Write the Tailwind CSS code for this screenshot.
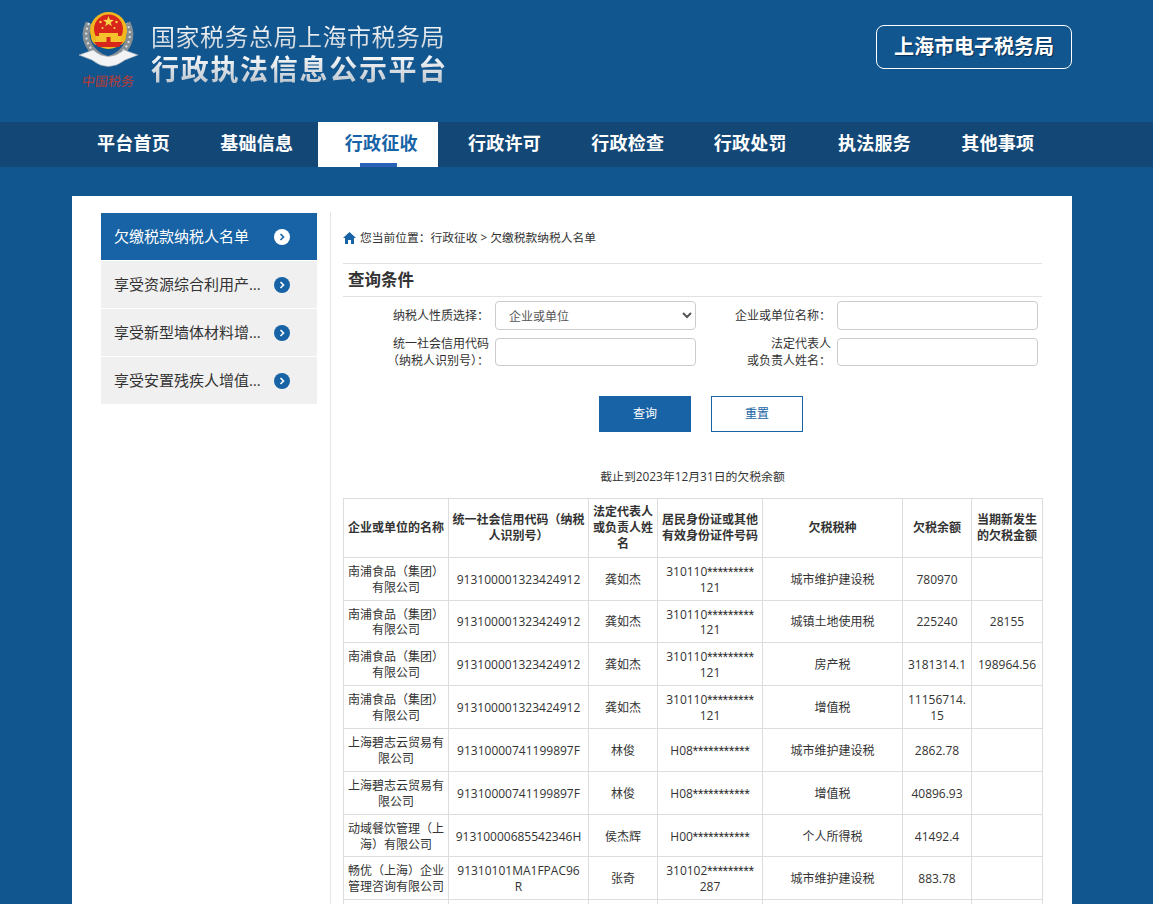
<!DOCTYPE html>
<html lang="zh-CN">
<head>
  <meta charset="UTF-8">
  <title>行政执法信息公示平台</title>
  <script src="https://cdn.jsdelivr.net/npm/@tailwindcss/browser@4"></script>
</head>
<body class="h-screen overflow-hidden bg-[#125690] font-['Open_Sans','Noto_Sans_CJK_SC',sans-serif] text-xs text-[#333]">

  <!-- Header -->
  <header class="flex h-[122px] items-start pl-[75px]">
    <div class="flex w-[66px] flex-col items-center pt-[10px]">
      <svg width="66" height="60" viewBox="0 0 66 60">
        <path d="M14 13 C7 27 13 43 33 50 C53 43 59 27 52 13" fill="none" stroke="#858e93" stroke-width="7"/>
        <path d="M14 13 C7 27 13 43 33 50 C53 43 59 27 52 13" fill="none" stroke="#dfe3e5" stroke-width="2" stroke-dasharray="2 3"/>
        <path d="M4 45 L18 40 Q33 53 49 40 L63 45 L50 50 Q33 63 17 50 Z" fill="#f1f3f4" stroke="#a6aeb3" stroke-width=".6"/>
        <path d="M16 27 C16 8 51 8 51 27 C51 31 48 34 46 35 H21 C19 34 16 31 16 27 Z" fill="#f0b81e"/>
        <circle cx="33.5" cy="20.5" r="18.5" fill="#f0b81e"/>
        <circle cx="33.5" cy="19" r="14.5" fill="#d8261c"/>
        <path d="M33.5 6 l1.4 3.8 4 .1 -3.2 2.5 1.2 3.9 -3.4 -2.3 -3.4 2.3 1.2 -3.9 -3.2 -2.5 4 -.1 Z" fill="#f9d648"/>
        <circle cx="25.5" cy="12" r="1.2" fill="#f9d648"/><circle cx="41.5" cy="12" r="1.2" fill="#f9d648"/>
        <circle cx="27.5" cy="18" r="1.1" fill="#f9d648"/><circle cx="39.5" cy="18" r="1.1" fill="#f9d648"/>
        <path d="M24 23 H43 V26 H46 V32 H21 V26 H24 Z" fill="#f3c22d"/>
        <path d="M19 32 H48 L44 37 H23 Z" fill="#d8261c"/>
        <rect x="31.5" y="27" width="4" height="5" fill="#d8261c"/>
      </svg>
      <span class="mt-[2px] -skew-x-6 text-[13px] leading-[18px] whitespace-nowrap text-[#b93a30] font-['Noto_Sans_CJK_SC',sans-serif]">中国税务</span>
    </div>
    <div class="ml-[10px] pt-[22px]">
      <div class="bg-gradient-to-b from-white to-[#c3ccd4] bg-clip-text text-[24px] leading-[30px] tracking-[0.5px] whitespace-nowrap text-transparent">国家税务总局上海市税务局</div>
      <div class="mt-[1px] bg-gradient-to-b from-white to-[#b9c3cc] bg-clip-text text-[28px] leading-[32px] font-bold tracking-[1.7px] whitespace-nowrap text-transparent">行政执法信息公示平台</div>
    </div>
    <a class="mt-[25px] mr-[81px] ml-auto flex h-[44px] w-[196px] items-center justify-center rounded-lg border border-white text-xl font-bold text-white [text-shadow:1px_1px_1px_#0b2f52]">上海市电子税务局</a>
  </header>

  <!-- Nav -->
  <nav class="flex h-[45px] bg-[#134876] pl-[71px] text-lg font-bold tracking-[0.25px] text-white">
    <div class="w-[123.33px]"><a class="block h-full w-[120px] pl-[26px] leading-[42px]">平台首页</a></div>
    <div class="w-[123.33px]"><a class="block h-full w-[120px] pl-[26px] leading-[42px]">基础信息</a></div>
    <div class="w-[123.33px]"><a class="relative block h-full w-[120px] bg-white pl-[27px] leading-[42px] text-[#1763a6]">行政征收<span class="absolute bottom-0 left-[42px] h-[4px] w-[37px] bg-[#2a62b8]"></span></a></div>
    <div class="w-[123.33px]"><a class="block h-full w-[120px] pl-[27px] leading-[42px]">行政许可</a></div>
    <div class="w-[123.33px]"><a class="block h-full w-[120px] pl-[27px] leading-[42px]">行政检查</a></div>
    <div class="w-[123.33px]"><a class="block h-full w-[120px] pl-[26px] leading-[42px]">行政处罚</a></div>
    <div class="w-[123.33px]"><a class="block h-full w-[120px] pl-[27px] leading-[42px]">执法服务</a></div>
    <div class="w-[123.33px]"><a class="block h-full w-[120px] pl-[27px] leading-[42px]">其他事项</a></div>
  </nav>

  <!-- Main -->
  <main class="mt-[29px] ml-[72px] flex w-[1000px] bg-white pl-[29px]">
    <aside class="mt-[17px] flex h-[191px] w-[216px] shrink-0 flex-col gap-[1px] text-[15px]">
      <a class="flex h-[47px] items-center bg-[#1763a6] pl-[13px] text-white">
        <span class="mb-[1px] w-[160px] truncate">欠缴税款纳税人名单</span>
        <span class="flex h-4 w-4 items-center justify-center rounded-full bg-white text-[#1763a6]"><svg width="8" height="8" viewBox="0 0 8 8"><path d="M2.5 1 L5.5 4 L2.5 7" fill="none" stroke="currentColor" stroke-width="1.6"/></svg></span>
      </a>
      <a class="flex h-[47px] items-center bg-[#f0f0f0] pl-[13px]">
        <span class="mr-[12px] mb-[1px] w-[148px] truncate">享受资源综合利用产品增值税优惠名单</span>
        <span class="flex h-4 w-4 items-center justify-center rounded-full bg-[#1763a6] text-white"><svg width="8" height="8" viewBox="0 0 8 8"><path d="M2.5 1 L5.5 4 L2.5 7" fill="none" stroke="currentColor" stroke-width="1.6"/></svg></span>
      </a>
      <a class="flex h-[47px] items-center bg-[#f0f0f0] pl-[13px]">
        <span class="mr-[12px] mb-[1px] w-[148px] truncate">享受新型墙体材料增值税优惠名单</span>
        <span class="flex h-4 w-4 items-center justify-center rounded-full bg-[#1763a6] text-white"><svg width="8" height="8" viewBox="0 0 8 8"><path d="M2.5 1 L5.5 4 L2.5 7" fill="none" stroke="currentColor" stroke-width="1.6"/></svg></span>
      </a>
      <a class="flex h-[47px] items-center bg-[#f0f0f0] pl-[13px]">
        <span class="mr-[12px] mb-[1px] w-[148px] truncate">享受安置残疾人增值税优惠名单</span>
        <span class="flex h-4 w-4 items-center justify-center rounded-full bg-[#1763a6] text-white"><svg width="8" height="8" viewBox="0 0 8 8"><path d="M2.5 1 L5.5 4 L2.5 7" fill="none" stroke="currentColor" stroke-width="1.6"/></svg></span>
      </a>
    </aside>

    <section class="mt-[16px] ml-[13px] w-[712px] border-l border-[#e5e5e5] pl-[12px]">
      <div class="flex h-[52px] w-[699px] items-center gap-[4px] border-b border-[#e2e2e2] pt-[1px]">
        <svg width="13" height="12" viewBox="0 0 13 12"><path d="M6.5 0 L13 6 H11 V12 H8 V8 H5 V12 H2 V6 H0 Z" fill="#1763a6"/></svg>
        <span class="text-[11.75px]">您当前位置：行政征收 &gt; 欠缴税款纳税人名单</span>
      </div>
      <h2 class="h-[33px] w-[699px] border-b border-[#e2e2e2] pl-[5px] text-[16.5px] leading-[32px] font-bold">查询条件</h2>

      <form class="mt-[4px] w-[699px]">
        <div class="flex h-[29px] items-center">
          <label class="w-[146px] text-right">纳税人性质选择：</label>
          <select class="ml-[6px] h-[29px] w-[201px] rounded border border-[#ccc] bg-white pt-[1px] pl-[9px] text-[#555]"><option>企业或单位</option></select>
          <label class="w-[135px] text-right">企业或单位名称：</label>
          <input class="ml-[6px] h-[29px] w-[201px] rounded border border-[#ccc]">
        </div>
        <div class="mt-[8px] flex h-[28px] items-center leading-[17px]">
          <label class="w-[146px] text-right">统一社会信用代码<br>（纳税人识别号）：</label>
          <input class="ml-[6px] h-[28px] w-[201px] rounded border border-[#ccc]">
          <label class="w-[135px] text-right">法定代表人<br>或负责人姓名：</label>
          <input class="ml-[6px] h-[28px] w-[201px] rounded border border-[#ccc]">
        </div>
        <div class="mt-[30px] flex gap-[20px] pl-[256px]">
          <button type="button" class="h-[36px] w-[92px] bg-[#1763a6] text-white">查询</button>
          <button type="button" class="h-[36px] w-[92px] border border-[#1763a6] text-[#1763a6]">重置</button>
        </div>
      </form>

      <p class="mt-[36px] w-[699px] text-center text-[11.85px] leading-[16px]">截止到2023年12月31日的欠税余额</p>

      <table class="mt-[14px] w-[699px] table-fixed text-center leading-[15.9px] [&_td]:border [&_td]:border-[#ddd] [&_td]:px-[3px] [&_td]:pt-[6px] [&_td]:pb-[4px] [&_td]:break-all [&_th]:border [&_th]:border-[#ddd] [&_th]:px-[3px] [&_th]:py-[5px]">
        <colgroup>
          <col class="w-[105px]"><col class="w-[140px]"><col class="w-[69px]"><col class="w-[105px]"><col class="w-[140px]"><col class="w-[69px]"><col class="w-[71px]">
        </colgroup>
        <thead>
          <tr>
            <th>企业或单位的名称</th><th>统一社会信用代码（纳税人识别号）</th><th>法定代表人或负责人姓名</th><th>居民身份证或其他有效身份证件号码</th><th>欠税税种</th><th>欠税余额</th><th>当期新发生的欠税金额</th>
          </tr>
        </thead>
        <tbody>
          <tr><td>南浦食品（集团）有限公司</td><td>913100001323424912</td><td>龚如杰</td><td>310110<span class="font-['Roboto'] leading-none">*********</span><br>121</td><td>城市维护建设税</td><td>780970</td><td></td></tr>
          <tr><td>南浦食品（集团）有限公司</td><td>913100001323424912</td><td>龚如杰</td><td>310110<span class="font-['Roboto'] leading-none">*********</span><br>121</td><td>城镇土地使用税</td><td>225240</td><td>28155</td></tr>
          <tr><td>南浦食品（集团）有限公司</td><td>913100001323424912</td><td>龚如杰</td><td>310110<span class="font-['Roboto'] leading-none">*********</span><br>121</td><td>房产税</td><td>3181314.1</td><td>198964.56</td></tr>
          <tr><td>南浦食品（集团）有限公司</td><td>913100001323424912</td><td>龚如杰</td><td>310110<span class="font-['Roboto'] leading-none">*********</span><br>121</td><td>增值税</td><td>11156714.<br>15</td><td></td></tr>
          <tr><td>上海碧志云贸易有限公司</td><td>91310000741199897F</td><td>林俊</td><td>H08<span class="font-['Roboto'] leading-none">***********</span></td><td>城市维护建设税</td><td>2862.78</td><td></td></tr>
          <tr><td>上海碧志云贸易有限公司</td><td>91310000741199897F</td><td>林俊</td><td>H08<span class="font-['Roboto'] leading-none">***********</span></td><td>增值税</td><td>40896.93</td><td></td></tr>
          <tr><td>动域餐饮管理（上海）有限公司</td><td>91310000685542346H</td><td>侯杰辉</td><td>H00<span class="font-['Roboto'] leading-none">***********</span></td><td>个人所得税</td><td>41492.4</td><td></td></tr>
          <tr><td>畅优（上海）企业管理咨询有限公司</td><td>91310101MA1FPAC96<br>R</td><td>张奇</td><td>310102<span class="font-['Roboto'] leading-none">*********</span><br>287</td><td>城市维护建设税</td><td>883.78</td><td></td></tr>
          <tr><td>畅优（上海）企业管理咨询有限公司</td><td>91310101MA1FPAC96<br>R</td><td>张奇</td><td>310102<span class="font-['Roboto'] leading-none">*********</span><br>287</td><td>增值税</td><td>12625.4</td><td></td></tr>
        </tbody>
      </table>
    </section>
  </main>
</body>
</html>
